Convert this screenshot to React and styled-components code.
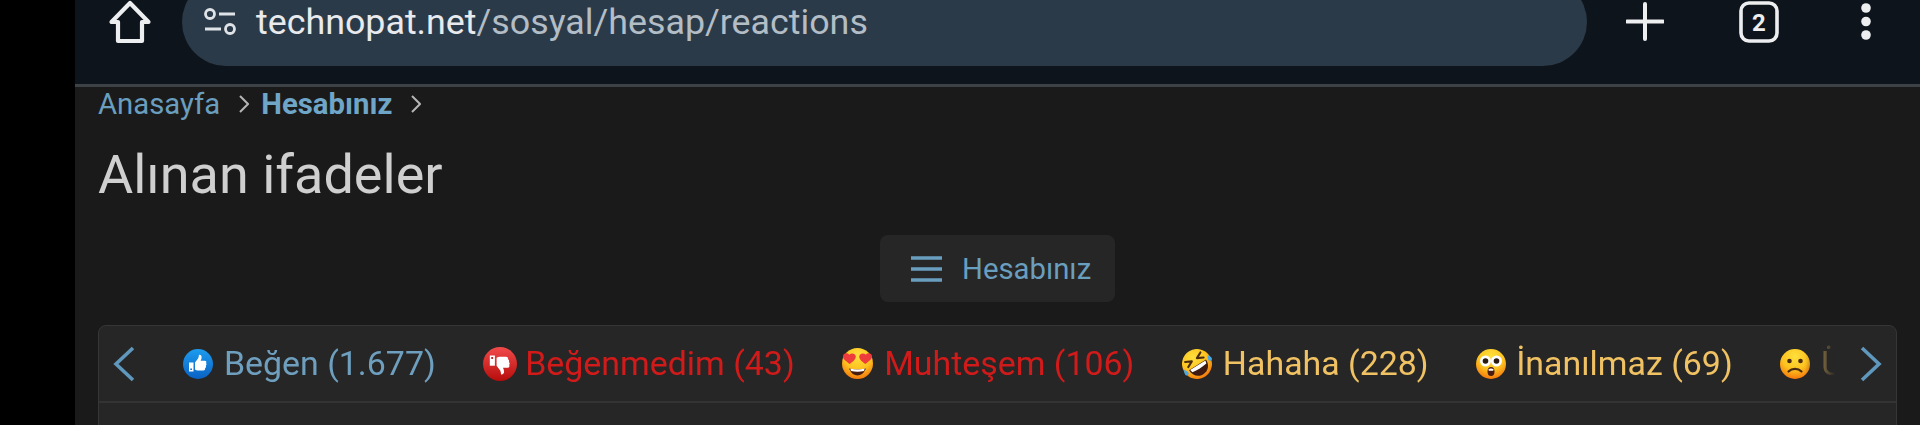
import React from "react";
import styled, { createGlobalStyle } from "styled-components";

const GlobalStyle = createGlobalStyle`
  html, body {
    margin: 0;
    height: 425px;
    overflow: hidden;
    background: #000;
    font-family: Roboto, "Liberation Sans", sans-serif;
  }
`;

const Screen = styled.div`
  height: 425px;
  padding-left: 75px;
  overflow: hidden;
  background: #000;
`;

const Main = styled.div`
  height: 425px;
  background: #1a1a1a;
  overflow: hidden;
`;

const BrowserBar = styled.div`
  display: flex;
  align-items: flex-start;
  height: 84px;
  overflow: hidden;
  background: #0e141b;
  border-bottom: 3px solid #3d4246;
`;

const ToolIcon = styled.svg`
  flex: none;
  display: block;
  margin-left: ${(p) => p.$left}px;
`;

const UrlPill = styled.div`
  flex: none;
  display: flex;
  align-items: center;
  width: 1405px;
  height: 88px;
  margin: -22px 0 0 30px;
  padding-left: 21px;
  box-sizing: border-box;
  border-radius: 44px;
  background: #2b3a48;
`;

const UrlText = styled.span`
  margin-left: 19px;
  font-size: 35.8px;
  white-space: nowrap;
  color: #b3bdc6;
`;

const UrlHost = styled.span`
  color: #e8eaed;
`;

const Content = styled.div`
  padding: 0 23px;
`;

const Breadcrumb = styled.nav`
  display: flex;
  align-items: center;
  height: 33px;
  font-size: 29.3px;
  color: #6a9ebf;
`;

const Crumb = styled.a`
  font-weight: ${(p) => (p.$current ? 700 : 400)};
  color: ${(p) => (p.$current ? "#6fa6c8" : "#6a9ebf")};
`;

const CrumbArrow = styled.svg`
  flex: none;
  margin: 0 12px 0 19px;
`;

const Title = styled.h1`
  margin: 20px 0 0;
  font-size: 54px;
  line-height: 70px;
  font-weight: 400;
  color: #cfcfcf;
`;

const MenuRow = styled.div`
  display: flex;
  justify-content: center;
  margin-top: 25px;
`;

const MenuButton = styled.button`
  display: flex;
  align-items: center;
  gap: 20px;
  width: 235px;
  height: 67px;
  padding: 0 0 0 31px;
  box-sizing: border-box;
  border: 0;
  border-radius: 8px;
  background: #262626;
  font: 400 29.3px Roboto, sans-serif;
  color: #6a9ebf;
`;

const Panel = styled.section`
  margin-top: 23px;
  height: 140px;
  box-sizing: border-box;
  border: 1px solid #363636;
  border-radius: 8px 8px 0 0;
  background: #262626;
`;

const TabRow = styled.div`
  display: flex;
  align-items: center;
  height: 75px;
  border-bottom: 2px solid #333;
`;

const ArrowIcon = styled.svg`
  flex: none;
  margin: ${(p) => p.$margin};
`;

const TabTrack = styled.div`
  flex: 1;
  min-width: 0;
  display: flex;
  align-items: center;
  gap: 47.5px;
  padding-left: 48px;
  overflow: hidden;
  mask-image: linear-gradient(to right, #000 calc(100% - 34px), transparent calc(100% - 4px));
`;

const Tab = styled.a`
  flex: none;
  display: flex;
  align-items: center;
  gap: ${(p) => p.$gap}px;
  font-size: 33.9px;
  line-height: 38px;
  white-space: nowrap;
  color: ${(p) => p.$color};
`;

const Face = ({ id, size = 30, tilt = 0, children }) => (
  <svg width={size} height={size} viewBox="0 0 30 30">
    <defs>
      <radialGradient id={id} cx="50%" cy="25%" r="80%">
        <stop offset="0%" stopColor="#ffe03c" />
        <stop offset="55%" stopColor="#fdc21f" />
        <stop offset="100%" stopColor="#f36d0a" />
      </radialGradient>
    </defs>
    <g transform={`rotate(${tilt} 15 15)`}>
      <circle cx="15" cy="15" r="15" fill={`url(#${id})`} />
      {children}
    </g>
  </svg>
);

const ThumbBadge = ({ id, from, to, size, flip }) => (
  <svg width={size} height={size} viewBox="0 0 30 30">
    <defs>
      <linearGradient id={id} x1="0" y1="0" x2="0" y2="1">
        <stop offset="0%" stopColor={from} />
        <stop offset="100%" stopColor={to} />
      </linearGradient>
    </defs>
    <circle cx="15" cy="15" r="15" fill={`url(#${id})`} />
    <g transform={flip ? "matrix(1 0 0 -1 0 30)" : undefined} fill="#fff">
      <path d="M6 13.500h4.500v9H6z" />
      <path d="M12 13.500l3.200-4.300c.5-.9.6-2 .7-3.200.9-.5 2.600.1 2.700 1.900.1 1.300-.5 2.600-1 3.800h4.200c1.400 0 2 1.500 1.200 2.400.8.800.7 2-.2 2.600.5.900.2 2-.7 2.400.3 1.200-.4 2.400-1.800 2.400h-5.600c-1 0-1.800-.4-2.700-1z" />
      <path d="M7.300 19.500h1.600v1.600H7.300z" fill={to} />
    </g>
  </svg>
);

const tabs = [
  {
    label: "Beğen (1.677)",
    color: "#6f9fbe",
    gap: 11,
    icon: <ThumbBadge id="like" from="#1c9cee" to="#0b62c4" size={30} />,
  },
  {
    label: "Beğenmedim (43)",
    color: "#d11a1a",
    gap: 8,
    icon: <ThumbBadge id="dislike" from="#f24a4a" to="#b60c0c" size={34} flip />,
  },
  {
    label: "Muhteşem (106)",
    color: "#d11a1a",
    gap: 11,
    icon: (
      <Face id="love" size={31}>
        <path d="M7.500 21c-.6-.4-.7-1 0-1.200 4.700 1.300 10.300 1.300 15 0 .7.200.6.800 0 1.200-1.500 3.600-4.200 5.500-7.500 5.500s-6-1.900-7.500-5.500z" fill="#4a1c10" />
        <path d="M8 19.900c4.600 1.200 9.400 1.200 14 0l-.7 2.300c-4.200 1-8.400 1-12.600 0z" fill="#fff" />
        <path d="M7.500 15.500C3.500 12.500.5 10.500 1 7.500c.4-2.500 3.800-3.500 6-1 2.500-2.200 6-1 6.300 1.600.3 2.900-2.500 5-5.800 7.400z" fill="#ee3b3b" />
        <path d="M22.500 15.500c4-3 7-5 6.500-8-.4-2.500-3.800-3.500-6-1-2.500-2.200-6-1-6.300 1.600-.3 2.900 2.500 5 5.800 7.400z" fill="#ee3b3b" />
      </Face>
    ),
  },
  {
    label: "Hahaha (228)",
    color: "#f0c263",
    gap: 11,
    icon: (
      <Face id="rofl" tilt={-32}>
        <path d="M5 16h20c.300 6-4 11-10 11S4.700 22 5 16z" fill="#3d1a12" />
        <path d="M6 16.500h18l-.8 3c-5.300 1-11.100 1-16.400 0z" fill="#fff" />
        <path d="M6 7l6 3-6 3M24 7l-6 3 6 3" fill="none" stroke="#4a2a10" strokeWidth="2.100" strokeLinecap="round" strokeLinejoin="round" />
        <path d="M1 13c1.500 2 2.500 3.800 2 5.500-.5 1.300-2.700 1.300-3.500 0-.7-1.300.5-3.500 1.500-5.500zM29 13c-1.500 2-2.500 3.800-2 5.500.5 1.300 2.700 1.300 3.500 0 .7-1.300-.5-3.500-1.500-5.500z" fill="#4aa8e8" />
      </Face>
    ),
  },
  {
    label: "İnanılmaz (69)",
    color: "#f0c263",
    gap: 10,
    icon: (
      <Face id="wow">
        <circle cx="9.500" cy="12" r="5.500" fill="#fff" />
        <circle cx="20.500" cy="12" r="5.500" fill="#fff" />
        <circle cx="9.500" cy="12" r="2.800" fill="#2a1a10" />
        <circle cx="20.500" cy="12" r="2.800" fill="#2a1a10" />
        <ellipse cx="15" cy="22.500" rx="3.500" ry="4.500" fill="#4a1c10" />
        <path d="M12.300 20.500c1.700-1.200 3.700-1.200 5.400 0l-.5 1.200h-4.400z" fill="#fff" />
      </Face>
    ),
  },
  {
    label: "Üzgün (12)",
    color: "#f0c263",
    gap: 11,
    icon: (
      <Face id="sad">
        <circle cx="9.500" cy="12" r="2.300" fill="#4a2a10" />
        <circle cx="20.500" cy="12" r="2.300" fill="#4a2a10" />
        <path d="M8.500 22.500c3.500-3.600 9.500-3.600 13 0" fill="none" stroke="#4a2a10" strokeWidth="2.200" strokeLinecap="round" />
      </Face>
    ),
  },
];

export default function App() {
  return (
    <>
      <GlobalStyle />
      <Screen>
        <Main>
          <BrowserBar>
            <ToolIcon $left={33} width="44" height="44" viewBox="0 0 44 44">
              <path d="M22 3 3.500 22H10v19h24V22h6.500z" fill="none" stroke="#eceef0" strokeWidth="4.200" strokeLinejoin="round" />
            </ToolIcon>
            <UrlPill>
              <svg width="34" height="28" viewBox="0 0 34 28">
                <circle cx="7" cy="6" r="4.500" fill="none" stroke="#dfe3e7" strokeWidth="2.800" />
                <path d="M16 6h16M2 21h16" stroke="#dfe3e7" strokeWidth="3" />
                <circle cx="27" cy="21" r="4.500" fill="none" stroke="#dfe3e7" strokeWidth="2.800" />
              </svg>
              <UrlText>
                <UrlHost>technopat.net</UrlHost>/sosyal/hesap/reactions
              </UrlText>
            </UrlPill>
            <ToolIcon $left={39} width="38" height="44" viewBox="0 0 38 44">
              <path d="M19 4v35M1 21.500h36" stroke="#eceef0" strokeWidth="4" strokeLinecap="round" />
            </ToolIcon>
            <ToolIcon $left={75} width="40" height="44" viewBox="0 0 40 44">
              <rect x="2" y="3" width="36" height="38" rx="8" fill="none" stroke="#eceef0" strokeWidth="3.600" />
              <text x="20" y="31" textAnchor="middle" fontFamily="Roboto, sans-serif" fontWeight="700" fontSize="24" fill="#eceef0">2</text>
            </ToolIcon>
            <ToolIcon $left={82} width="10" height="44" viewBox="0 0 10 44">
              <circle cx="5" cy="8" r="4.800" fill="#eceef0" />
              <circle cx="5" cy="21.500" r="4.800" fill="#eceef0" />
              <circle cx="5" cy="35" r="4.800" fill="#eceef0" />
            </ToolIcon>
          </BrowserBar>
          <Content>
            <Breadcrumb>
              <Crumb>Anasayfa</Crumb>
              <CrumbArrow width="10" height="20" viewBox="0 0 10 20">
                <path d="M1 2l8 8-8 8" fill="none" stroke="#b5b5b5" strokeWidth="2" />
              </CrumbArrow>
              <Crumb $current>Hesabınız</Crumb>
              <CrumbArrow width="10" height="20" viewBox="0 0 10 20">
                <path d="M1 2l8 8-8 8" fill="none" stroke="#b5b5b5" strokeWidth="2" />
              </CrumbArrow>
            </Breadcrumb>
            <Title>Alınan ifadeler</Title>
            <MenuRow>
              <MenuButton>
                <svg width="31" height="28" viewBox="0 0 31 28">
                  <path d="M0 3h31M0 14h31M0 25h31" stroke="#6a9ebf" strokeWidth="3.400" />
                </svg>
                Hesabınız
              </MenuButton>
            </MenuRow>
            <Panel>
              <TabRow>
                <ArrowIcon $margin="0 0 0 14px" width="22" height="36" viewBox="0 0 22 36">
                  <path d="M20 2 3 18l17 16" fill="none" stroke="#5f97bd" strokeWidth="3.600" />
                </ArrowIcon>
                <TabTrack>
                  {tabs.map((tab) => (
                    <Tab key={tab.label} $color={tab.color} $gap={tab.gap}>
                      {tab.icon}
                      {tab.label}
                    </Tab>
                  ))}
                </TabTrack>
                <ArrowIcon $margin="0 14px 0 21px" width="22" height="36" viewBox="0 0 22 36">
                  <path d="M2 2l17 16L2 34" fill="none" stroke="#5f97bd" strokeWidth="3.600" />
                </ArrowIcon>
              </TabRow>
            </Panel>
          </Content>
        </Main>
      </Screen>
    </>
  );
}
